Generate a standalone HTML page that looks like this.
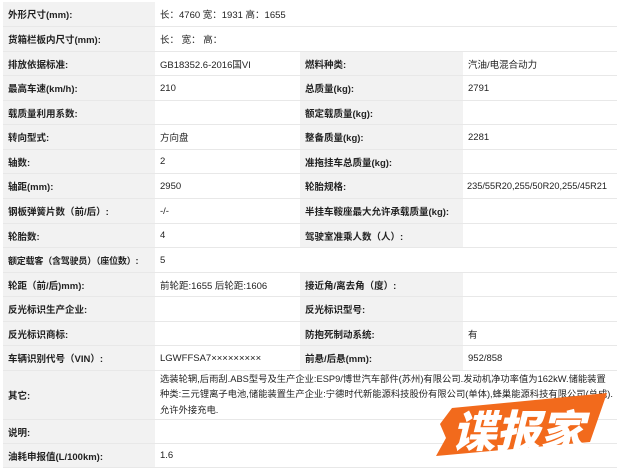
<!DOCTYPE html>
<html><head><meta charset="utf-8"><style>
body{margin:0;width:620px;height:470px;background:#fff;font-family:"Liberation Sans","Noto Sans CJK SC",sans-serif;font-size:9.5px;color:#222;position:relative;overflow:hidden}
.r{position:absolute;left:3px;width:614px;border-bottom:1px solid #e8e8e8;box-sizing:border-box}
.c{position:absolute;top:0;bottom:0;display:flex;align-items:center;box-sizing:border-box;padding-left:5px;white-space:nowrap}
.l{background:#f2f2f2;font-weight:bold}
.a{left:0;width:152px}.b{left:152px;width:145px}.d{left:297px;width:163px}.e{left:460px;width:154px}
.w{left:152px;width:462px}
.t{line-height:15.5px;padding-right:4px;white-space:normal;font-size:9.3px}
</style></head><body>
<div class="r" style="top:2px;height:25px"><div class="c l a">外形尺寸(mm):</div><div class="c b" style="width:462px">长：4760 宽：1931 高：1655</div></div>
<div class="r" style="top:27px;height:25px"><div class="c l a">货箱栏板内尺寸(mm):</div><div class="c b" style="width:462px">长：&nbsp;宽：&nbsp;高：</div></div>
<div class="r" style="top:52px;height:24px"><div class="c l a">排放依据标准:</div><div class="c b">GB18352.6-2016国VI</div><div class="c l d">燃料种类:</div><div class="c e">汽油/电混合动力</div></div>
<div class="r" style="top:76px;height:25px"><div class="c l a">最高车速(km/h):</div><div class="c b">210</div><div class="c l d">总质量(kg):</div><div class="c e">2791</div></div>
<div class="r" style="top:101px;height:24px"><div class="c l a">载质量利用系数:</div><div class="c b"></div><div class="c l d">额定载质量(kg):</div><div class="c e"></div></div>
<div class="r" style="top:125px;height:25px"><div class="c l a">转向型式:</div><div class="c b">方向盘</div><div class="c l d">整备质量(kg):</div><div class="c e">2281</div></div>
<div class="r" style="top:150px;height:24px"><div class="c l a">轴数:</div><div class="c b">2</div><div class="c l d">准拖挂车总质量(kg):</div><div class="c e"></div></div>
<div class="r" style="top:174px;height:25px"><div class="c l a">轴距(mm):</div><div class="c b">2950</div><div class="c l d">轮胎规格:</div><div class="c e" style="padding-left:4px;font-size:9.2px">235/55R20,255/50R20,255/45R21</div></div>
<div class="r" style="top:199px;height:25px"><div class="c l a">钢板弹簧片数（前/后）:</div><div class="c b">-/-</div><div class="c l d">半挂车鞍座最大允许承载质量(kg):</div><div class="c e"></div></div>
<div class="r" style="top:224px;height:24px"><div class="c l a">轮胎数:</div><div class="c b">4</div><div class="c l d">驾驶室准乘人数（人）:</div><div class="c e"></div></div>
<div class="r" style="top:248px;height:25px"><div class="c l a" style="font-size:9px;letter-spacing:-0.2px">额定载客（含驾驶员）（座位数）:</div><div class="c w">5</div></div>
<div class="r" style="top:273px;height:24px"><div class="c l a">轮距（前/后)mm):</div><div class="c b">前轮距:1655 后轮距:1606</div><div class="c l d">接近角/离去角（度）:</div><div class="c e"></div></div>
<div class="r" style="top:297px;height:25px"><div class="c l a">反光标识生产企业:</div><div class="c b"></div><div class="c l d">反光标识型号:</div><div class="c e"></div></div>
<div class="r" style="top:322px;height:24px"><div class="c l a">反光标识商标:</div><div class="c b"></div><div class="c l d">防抱死制动系统:</div><div class="c e">有</div></div>
<div class="r" style="top:346px;height:25px"><div class="c l a">车辆识别代号（VIN）:</div><div class="c b">LGWFFSA7×××××××××</div><div class="c l d">前悬/后悬(mm):</div><div class="c e">952/858</div></div>
<div class="r" style="top:371px;height:49px"><div class="c l a">其它:</div><div class="c w t">选装轮辋,后雨刮.ABS型号及生产企业:ESP9/博世汽车部件(苏州)有限公司.发动机净功率值为162kW.储能装置种类:三元锂离子电池,储能装置生产企业:宁德时代新能源科技股份有限公司(单体),蜂巢能源科技有限公司(总成).允许外接充电.</div></div>
<div class="r" style="top:420px;height:24px"><div class="c l a">说明:</div><div class="c w"></div></div>
<div class="r" style="top:444px;height:24px"><div class="c l a">油耗申报值(L/100km):</div><div class="c w">1.6</div></div>
<svg style="position:absolute;left:0;top:0" width="620" height="470">
<polygon points="452,408 607,393 590,442 436,456 446,438 440,424" fill="#f26a1c"/>
<text x="0" y="0" font-family="Noto Sans CJK SC,sans-serif" font-weight="900" font-size="44" fill="#fff" transform="translate(452,447) skewX(-14)" textLength="132" lengthAdjust="spacingAndGlyphs">谍报家</text>
</svg>
</body></html>
